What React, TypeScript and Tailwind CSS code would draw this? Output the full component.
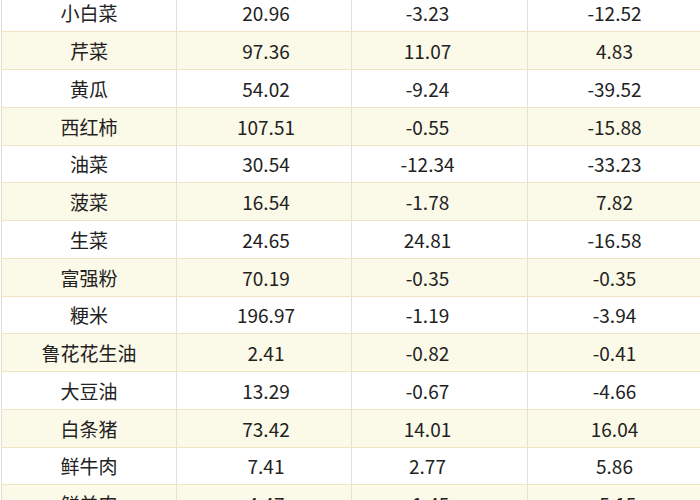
const rows: [string, string, string, string][] = [
  ['小白菜', '20.96', '-3.23', '-12.52'],
  ['芹菜', '97.36', '11.07', '4.83'],
  ['黄瓜', '54.02', '-9.24', '-39.52'],
  ['西红柿', '107.51', '-0.55', '-15.88'],
  ['油菜', '30.54', '-12.34', '-33.23'],
  ['菠菜', '16.54', '-1.78', '7.82'],
  ['生菜', '24.65', '24.81', '-16.58'],
  ['富强粉', '70.19', '-0.35', '-0.35'],
  ['粳米', '196.97', '-1.19', '-3.94'],
  ['鲁花花生油', '2.41', '-0.82', '-0.41'],
  ['大豆油', '13.29', '-0.67', '-4.66'],
  ['白条猪', '73.42', '14.01', '16.04'],
  ['鲜牛肉', '7.41', '2.77', '5.86'],
  ['鲜羊肉', '4.47', '-1.45', '-5.15'],
];

export default function App() {
  return (
    <div className="w-[700px] h-[500px] overflow-hidden bg-white">
      <table
        className="ml-[1px] -mt-[6px] border-collapse table-fixed w-[700px] text-[19px] text-[#222]"
        style={{ fontFamily: '"Noto Sans CJK SC", "Noto Sans", sans-serif' }}
      >
        <tbody>
          {rows.map((r, i) => (
            <tr key={r[0]} className={i % 2 === 1 ? 'bg-[#fbf9e8]' : 'bg-white'}>
              <td className="w-[175px] h-[37.75px] p-0 text-center border-b border-b-[#efe4c6] border-l border-l-[#e2ddd3] border-r border-r-[#e6e0d2] leading-none">
                {r[0]}
              </td>
              <td className="w-[175px] p-0 pl-1 text-center border-b border-b-[#efe4c6] border-r border-r-[#e6e0d2] leading-none">
                {r[1]}
              </td>
              <td className="w-[176px] p-0 pr-6 text-center border-b border-b-[#efe4c6] border-r border-r-[#e6e0d2] leading-none">
                {r[2]}
              </td>
              <td className="p-0 text-center border-b border-b-[#efe4c6] leading-none">
                {r[3]}
              </td>
            </tr>
          ))}
        </tbody>
      </table>
    </div>
  );
}
